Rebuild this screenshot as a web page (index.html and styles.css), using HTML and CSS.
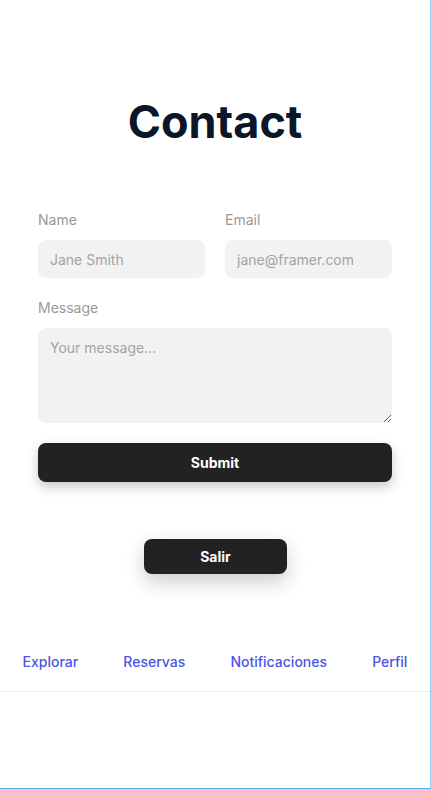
FILE: index.html
```html
<!DOCTYPE html>
<html lang="en">
<head>
<meta charset="utf-8">
<title>Contact</title>
<link rel="stylesheet" href="styles.css">
</head>
<body>
<div class="frame">
  <main class="content">
    <h1 class="title">Contact</h1>
    <form class="form">
      <div class="row">
        <label class="field">
          <span class="label">Name</span>
          <input class="input" type="text" placeholder="Jane Smith">
        </label>
        <label class="field">
          <span class="label">Email</span>
          <input class="input" type="email" placeholder="jane@framer.com">
        </label>
      </div>
      <label class="field">
        <span class="label">Message</span>
        <textarea class="input textarea" placeholder="Your message..."></textarea>
      </label>
      <button type="button" class="btn btn-submit">Submit</button>
    </form>
    <div class="exit-wrap">
      <button type="button" class="btn btn-exit">Salir</button>
    </div>
  </main>
  <nav class="nav">
    <a class="nav-link" href="#">Explorar</a>
    <a class="nav-link" href="#">Reservas</a>
    <a class="nav-link" href="#">Notificaciones</a>
    <a class="nav-link" href="#">Perfil</a>
  </nav>
</div>
</body>
</html>
```
FILE: styles.css
```css
* { box-sizing: border-box; }
html, body {
  margin: 0;
  padding: 0;
  background: #fff;
}
body {
  font-family: Inter, "Noto Sans", sans-serif;
}
.frame {
  width: 431px;
  height: 789px;
  border-right: 1px solid #94cffa;
  border-bottom: 1px solid #5aaaf0;
  display: flex;
  flex-direction: column;
  overflow: hidden;
}
.content {
  padding: 95px 38px 0;
}
.title {
  margin: 0;
  text-align: center;
  font-size: 45px;
  line-height: 53px;
  font-weight: 700;
  letter-spacing: 0;
  color: #0b1626;
}
.form {
  margin-top: 62px;
  display: flex;
  flex-direction: column;
}
.row {
  display: grid;
  grid-template-columns: 1fr 1fr;
  column-gap: 20px;
  margin-bottom: 20px;
}
.field {
  display: flex;
  flex-direction: column;
  gap: 10px;
}
.label {
  font-size: 14px;
  line-height: 20px;
  color: #999;
}
.input {
  display: block;
  width: 100%;
  height: 38px;
  border: none;
  outline: none;
  border-radius: 8px;
  background: #f2f2f2;
  padding: 0 12px;
  font-family: inherit;
  font-size: 14px;
  color: #333;
}
.input::placeholder {
  color: #a3a3a3;
}
.textarea {
  height: 95px;
  padding: 10px 12px;
  line-height: 20px;
  resize: vertical;
}
.btn {
  border: none;
  background: #222;
  color: #fff;
  font-family: inherit;
  font-size: 14px;
  font-weight: 700;
  border-radius: 8px;
  cursor: pointer;
}
.btn-submit {
  margin-top: 20px;
  height: 39px;
  width: 100%;
  box-shadow: 0 5px 12px rgba(0, 0, 0, 0.22);
}
.exit-wrap {
  display: flex;
  justify-content: center;
  margin-top: 57px;
}
.btn-exit {
  width: 143px;
  height: 35px;
  margin-left: 1px;
  box-shadow: 0 8px 20px rgba(0, 0, 0, 0.2);
}
.nav {
  margin-top: 68px;
  display: flex;
  justify-content: space-around;
  align-items: center;
  height: 50px;
  padding-bottom: 10px;
  border-bottom: 1px solid #eeeeee;
}
.nav-link {
  font-size: 14px;
  font-weight: 500;
  color: #4b55e6;
  text-decoration: none;
  line-height: 20px;
}
```
